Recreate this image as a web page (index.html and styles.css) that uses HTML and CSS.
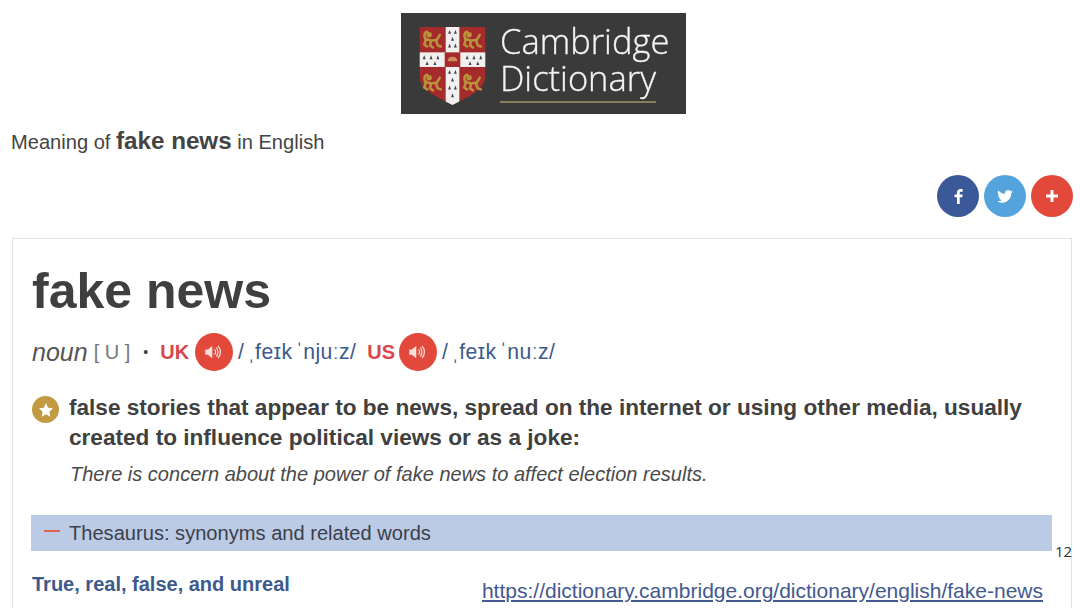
FILE: index.html
```html
<!DOCTYPE html>
<html>
<head>
    <title>Cambridge Dictionary - fake news</title>
    <meta charset="utf-8">
    <link rel="stylesheet" href="styles.css">
</head>
<body>
    <!-- Logo -->
    <header class="top">
        <div class="logo">
            <svg class="shield" width="67" height="78" viewBox="0 0 68 80">
                <defs>
                    <clipPath id="shield-shape">
                        <path d="M0 0H68V50C68 64 50 72 34 80C18 72 0 64 0 50Z"/>
                    </clipPath>
                    <g id="lion" fill="none" stroke="#b9933a" stroke-width="2.600" stroke-linecap="round">
                        <path d="M3 10L9 12L15 11"/>
                        <path d="M15 11L18 6"/>
                        <path d="M4 10L2 16L5 18"/>
                        <path d="M9 12L8 17L11 19"/>
                        <path d="M14 12L16 17L19 18"/>
                        <path d="M3 10C1 6 3 3 5 3"/>
                        <circle cx="7" cy="6" r="2.800" fill="#b9933a" stroke="none"/>
                    </g>
                    <g id="ermine" fill="#3c4250">
                        <path d="M0 0L1.500 4H-1.500Z"/>
                    </g>
                </defs>
                <g clip-path="url(#shield-shape)">
                    <rect width="68" height="80" fill="#a52a2b"/>
                    <rect x="27" width="14" height="80" fill="#f2f0ee"/>
                    <rect y="26" width="68" height="15" fill="#f2f0ee"/>
                    <rect x="26" y="26" width="16" height="15" fill="#a52a2b"/>
                    <path d="M29 35C29 29 39 29 39 35Z" fill="#d08a5c"/>
                </g>
                <use href="#lion" x="3" y="2"/>
                <use href="#lion" x="44" y="2"/>
                <use href="#lion" x="3" y="46"/>
                <use href="#lion" x="44" y="46"/>
                <use href="#ermine" x="31" y="3"/><use href="#ermine" x="37" y="3"/>
                <use href="#ermine" x="34" y="10"/>
                <use href="#ermine" x="31" y="17"/><use href="#ermine" x="37" y="17"/>
                <use href="#ermine" x="31" y="44"/><use href="#ermine" x="37" y="44"/>
                <use href="#ermine" x="34" y="52"/>
                <use href="#ermine" x="31" y="60"/><use href="#ermine" x="37" y="60"/>
                <use href="#ermine" x="34" y="68"/>
                <use href="#ermine" x="5" y="29"/><use href="#ermine" x="12" y="29"/><use href="#ermine" x="19" y="29"/>
                <use href="#ermine" x="8" y="35"/><use href="#ermine" x="16" y="35"/>
                <use href="#ermine" x="49" y="29"/><use href="#ermine" x="56" y="29"/><use href="#ermine" x="63" y="29"/>
                <use href="#ermine" x="52" y="35"/><use href="#ermine" x="60" y="35"/>
            </svg>
            <div class="logo-text">
                <span>Cambridge</span>
                <span class="logo-second">Dictionary</span>
            </div>
        </div>
    </header>

    <p class="meaning">Meaning of <b>fake news</b> in English</p>

    <!-- Share buttons -->
    <div class="share">
        <span class="round fb">
            <svg width="9" height="17" viewBox="0 0 12 20"><path d="M7.600 20V11H11L11.500 7.400H7.600V5.300C7.600 4.200 8 3.500 9.400 3.500H11.600V.3C11.200.2 10 .1 8.800.1 6 .1 4 1.800 4 5V7.400H.8V11H4V20Z" fill="#fff"/></svg>
        </span>
        <span class="round tw">
            <svg width="16" height="13" viewBox="0 0 24 20"><path d="M24 2.400A10 10 0 0 1 21.200 3.200 4.900 4.900 0 0 0 23.300.5 9.800 9.800 0 0 1 20.100 1.700 4.900 4.900 0 0 0 11.800 6.200 14 14 0 0 1 1.700.9 4.900 4.900 0 0 0 3.200 7.500 4.900 4.900 0 0 1 1 6.900 4.900 4.900 0 0 0 4.900 11.800 4.900 4.900 0 0 1 2.700 11.900 4.900 4.900 0 0 0 7.300 15.300 9.900 9.900 0 0 1 0 17.300 14 14 0 0 0 21.500 5 10 10 0 0 0 24 2.400Z" fill="#fff"/></svg>
        </span>
        <span class="round plus">
            <svg width="12" height="12" viewBox="0 0 16 16"><path d="M6 0H10V6H16V10H10V16H6V10H0V6H6Z" fill="#fff"/></svg>
        </span>
    </div>

    <!-- Entry -->
    <main class="card">
        <h1 class="word">fake news</h1>

        <div class="pos-line">
            <i class="pos">noun</i>
            <span class="gram">[ U ]</span>
            <span class="dot">&bull;</span>
            <b class="region">UK</b>
            <span class="round speaker">
                <svg width="18" height="14" viewBox="0 0 20 16">
                    <path d="M0 5H3L8 1V15L3 11H0Z" fill="#f7e0dc"/>
                    <path d="M10.500 5A4 4 0 0 1 10.500 11M12.500 3A7 7 0 0 1 12.500 13M14.500 1A10 10 0 0 1 14.500 15" fill="none" stroke="#f7e0dc" stroke-width="1.400"/>
                </svg>
            </span>
            <span class="ipa ipa-uk">/ ˌfeɪk ˈnjuːz/</span>
            <b class="region region-us">US</b>
            <span class="round speaker">
                <svg width="18" height="14" viewBox="0 0 20 16">
                    <path d="M0 5H3L8 1V15L3 11H0Z" fill="#f7e0dc"/>
                    <path d="M10.500 5A4 4 0 0 1 10.500 11M12.500 3A7 7 0 0 1 12.500 13M14.500 1A10 10 0 0 1 14.500 15" fill="none" stroke="#f7e0dc" stroke-width="1.400"/>
                </svg>
            </span>
            <span class="ipa">/ ˌfeɪk ˈnuːz/</span>
        </div>

        <div class="def-row">
            <span class="round star">
                <svg width="14" height="14" viewBox="0 0 20 20"><path d="M10 0L13 6.700 20 7.500 14.800 12.400 16.200 19.500 10 16 3.800 19.500 5.200 12.400 0 7.500 7 6.700Z" fill="#fff"/></svg>
            </span>
            <p class="def">false stories that appear to be news, spread on the internet or using other media, usually created to influence political views or as a joke:</p>
        </div>
        <p class="example">There is concern about the power of fake news to affect election results.</p>

        <div class="thesaurus"><span class="minus"></span>Thesaurus: synonyms and related words</div>

        <div class="bottom-row">
            <b class="topic">True, real, false, and unreal</b>
            <a class="link" href="#">https://dictionary.cambridge.org/dictionary/english/fake-news</a>
        </div>
    </main>

    <span class="page-num">12</span>
</body>
</html>
```

FILE: styles.css
```css
html, body {
    height: 608px;
    overflow: hidden;
}

body {
    margin: 0;
    background: #fff;
    font-family: "Liberation Sans", Arial, sans-serif;
    color: #3f3f3f;
    position: relative;
}

.top {
    display: flex;
    justify-content: center;
    padding: 13px 0 0 7px;
}

.logo {
    width: 285px;
    height: 101px;
    background: #3a3a3a;
    display: flex;
    align-items: center;
    padding-left: 18px;
    box-sizing: border-box;
    filter: blur(0.5px);
}

.shield {
    margin: 5px 14px 0 0;
    flex: none;
}

.logo-text {
    font-family: "Open Sans", sans-serif;
    font-weight: 300;
    font-size: 34.5px;
    line-height: 37px;
    color: #f4f4f4;
    -webkit-text-stroke: 0.3px #f4f4f4;
    display: flex;
    flex-direction: column;
    align-items: flex-start;
    margin-top: -2px;
}

.logo-second {
    border-bottom: 2px solid #8b7c5c;
    padding-bottom: 5px;
}

.meaning {
    margin: 12px 0 0 11px;
    font-size: 20.1px;
    line-height: 30px;
    color: #444;
}

.meaning b {
    font-size: 24.2px;
}

.share {
    display: flex;
    justify-content: flex-end;
    gap: 5px;
    padding-right: 7px;
    margin-top: 18px;
}

.round {
    display: flex;
    align-items: center;
    justify-content: center;
    border-radius: 50%;
    flex: none;
}

.share .round {
    width: 42px;
    height: 42px;
}

.fb { background: #3b5998; }
.tw { background: #55a3dc; }
.plus { background: #e2493a; }

.card {
    margin: 21px 8px 0 12px;
    border: 1px solid #e2e2e2;
    border-bottom: none;
    padding: 19px 19px 0 18px;
    height: 370px;
    box-sizing: border-box;
}

.word {
    margin: 0 0 0 1px;
    font-size: 50px;
    line-height: 66px;
    color: #3f3f3f;
}

.pos-line {
    display: flex;
    align-items: center;
    margin: 9px 0 0 1px;
    height: 38px;
}

.pos {
    font-size: 25px;
    color: #555;
}

.gram {
    font-size: 20px;
    color: #777;
    margin-left: 6px;
}

.dot {
    font-size: 14px;
    margin: 0 12px 0 13px;
}

.region {
    font-size: 20px;
    color: #d8474a;
    margin-right: 6px;
}

.region-us {
    margin-right: 4px;
}

.speaker {
    width: 38px;
    height: 38px;
    background: #e2493a;
    margin-right: 5px;
}

.ipa {
    font-size: 21.2px;
    color: #3d5a8c;
    letter-spacing: 0.4px;
    word-spacing: -3px;
}

.ipa-uk {
    margin-right: 11px;
}

.def-row {
    display: flex;
    margin-top: 22px;
}

.star {
    width: 27px;
    height: 27px;
    background: #c29a42;
    margin: 3px 10px 0 1px;
}

.def {
    margin: 0;
    font-size: 22.6px;
    font-weight: bold;
    line-height: 30px;
    color: #404040;
}

.example {
    margin: 6px 0 0 39px;
    font-size: 20.03px;
    line-height: 30px;
    font-style: italic;
    color: #4a4a4a;
}

.thesaurus {
    display: flex;
    align-items: center;
    margin-top: 26px;
    height: 36px;
    background: #bccbe5;
    font-size: 20.1px;
    color: #3a3f4a;
}

.minus {
    width: 16px;
    height: 2px;
    background: #e2604f;
    margin: -4px 9px 0 13px;
}

.bottom-row {
    display: flex;
    justify-content: space-between;
    margin: 22px 0 0 1px;
    padding-right: 9px;
}

.topic {
    font-size: 20px;
    color: #3d5a8c;
}

.link {
    font-size: 21px;
    color: #43598f;
    margin-top: 6px;
}

.page-num {
    position: absolute;
    left: 1055px;
    top: 541px;
    font-family: "Open Sans", sans-serif;
    font-size: 15px;
    color: #333;
}
```
